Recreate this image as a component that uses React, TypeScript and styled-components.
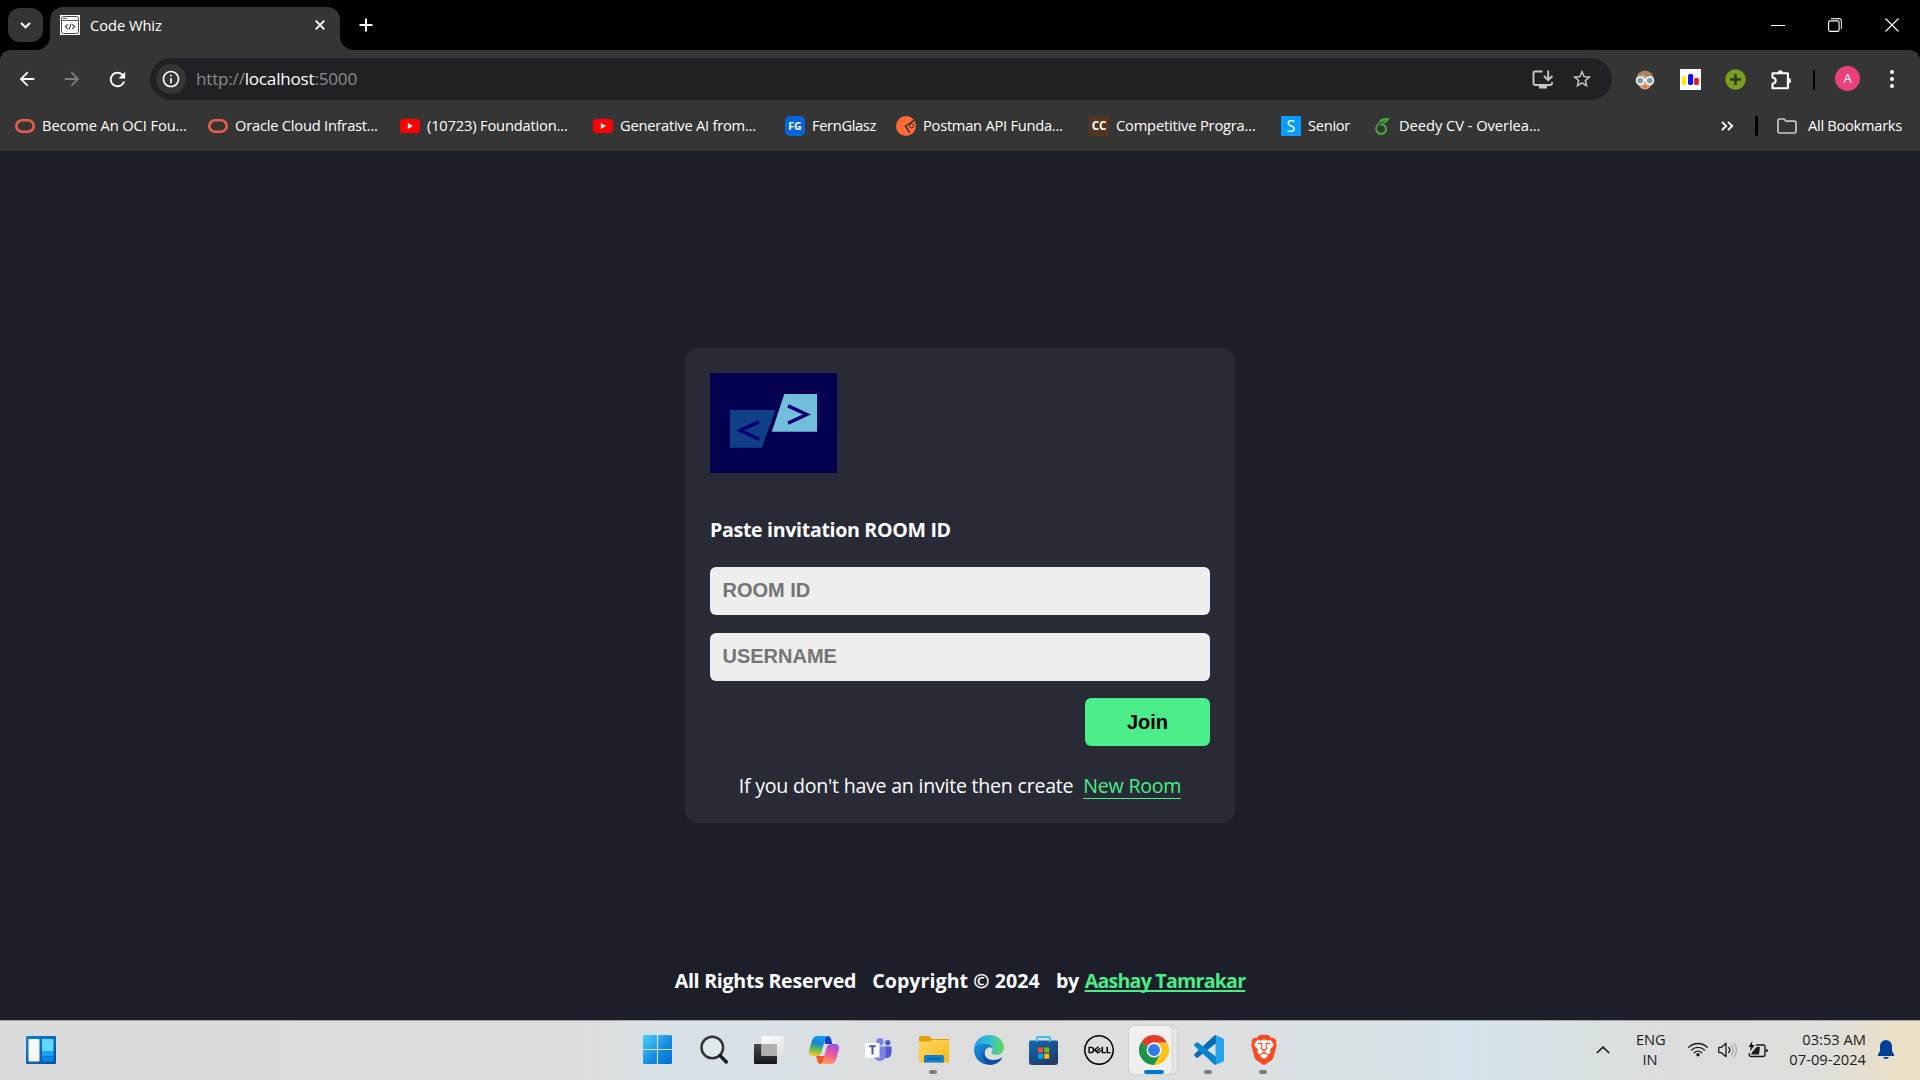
import React from 'react';
import styled, { createGlobalStyle } from 'styled-components';
import { MdArrowBack, MdArrowForward, MdRefresh, MdInfoOutline, MdStarBorder } from 'react-icons/md';
import { SiDell, SiBrave, SiOverleaf } from 'react-icons/si';

const ui = `"Segoe UI", "Open Sans", "Noto Sans", sans-serif`;

const Global = createGlobalStyle`
  * { box-sizing: border-box; }
  body { margin: 0; background: #1c1e29; overflow: hidden; font-family: ${ui}; }
  svg { display: block; flex: none; }
`;

const Screen = styled.div`
  width: 1920px;
  height: 1080px;
  display: flex;
  flex-direction: column;
  overflow: hidden;
`;

const Label = styled.span<{ $ls?: number }>`
  letter-spacing: ${p => p.$ls ?? 0}px;
  white-space: pre;
`;

/* ---------- browser chrome ---------- */

const TabStrip = styled.div`
  height: 50px;
  background: #000;
  display: flex;
  align-items: flex-end;
  padding-left: 8px;
  color: #fff;
`;

const TabSearch = styled.div`
  width: 35px;
  height: 34px;
  margin: 0 7px 8px 0;
  border-radius: 12px;
  background: #353535;
  display: grid;
  place-items: center;
`;

const Tab = styled.div`
  position: relative;
  width: 290px;
  height: 43px;
  padding: 0 15px 7px 10px;
  border-radius: 13px 13px 0 0;
  background: #353535;
  display: flex;
  align-items: center;
  gap: 10px;
  font-size: 14.7px;
  &::before, &::after {
    content: '';
    position: absolute;
    bottom: 0;
    width: 14px;
    height: 14px;
  }
  &::before { left: -14px; background: radial-gradient(circle at 0 0, transparent 13.5px, #353535 14.5px); }
  &::after { right: -14px; background: radial-gradient(circle at 100% 0, transparent 13.5px, #353535 14.5px); }
`;

const TabTitle = styled(Label)`
  flex: 1;
  line-height: 20px;
  padding-bottom: 1px;
`;

const NewTab = styled.div`
  align-self: center;
  margin-left: 19px;
`;

const WindowButtons = styled.div`
  margin-left: auto;
  align-self: stretch;
  display: flex;
  align-items: center;
  gap: 43px;
  padding: 0 21px 1px 0;
`;

const ToolbarBack = styled.div`
  height: 102px;
  background: #000;
`;

const Toolbar = styled.div`
  height: 102px;
  background: #353535;
  border-radius: 10px 10px 0 0;
  border-bottom: 1px solid #1c1e29;
`;

const NavRow = styled.div`
  height: 58px;
  display: flex;
  align-items: center;
  padding-left: 15px;
`;

const NavButton = styled.div<{ $dim?: boolean }>`
  width: 45px;
  color: ${p => (p.$dim ? '#7d7d7d' : '#fff')};
  padding-left: 1px;
`;

const Omnibox = styled.div`
  width: 1462px;
  height: 42px;
  border-radius: 21px;
  background: #202124;
  display: flex;
  align-items: center;
  padding: 0 19px 0 6px;
  font-size: 17.15px;
  color: #8a8b8d;
`;

const InfoBadge = styled.div`
  width: 30px;
  height: 30px;
  border-radius: 50%;
  background: #353535;
  display: grid;
  place-items: center;
  color: #fff;
  margin-right: 10px;
`;

const Url = styled(Label)`
  flex: 1;
  line-height: 24px;
  b { font-weight: 400; color: #fff; }
`;

const BoxIcons = styled.div`
  display: flex;
  align-items: center;
  gap: 17px;
  color: #c6c6c6;
`;

const Extensions = styled.div`
  display: flex;
  align-items: center;
  gap: 24px;
  margin-left: 23px;
  padding-top: 1px;
  & > :first-child { margin-right: 1px; }
  & > :last-child { margin-left: -3px; }
`;

const Divider = styled.div<{ $h: number; $w: number }>`
  width: ${p => p.$w}px;
  height: ${p => p.$h}px;
  background: #000;
  border-radius: 1px;
`;

const Avatar = styled.div`
  width: 25px;
  height: 25px;
  border-radius: 50%;
  background: #ec407a;
  color: #fff;
  font-size: 13px;
  line-height: 25px;
  text-align: center;
  margin: 0 30px 1px 20px;
`;

const BookmarkRow = styled.div`
  height: 36px;
  display: flex;
  align-items: center;
  padding-left: 15px;
  color: #fff;
  font-size: 14.7px;
  line-height: 20px;
  & ${Label} { padding-bottom: 2px; }
`;

const Bookmark = styled.div<{ $w: number }>`
  width: ${p => p.$w}px;
  display: flex;
  align-items: center;
  gap: 7px;
`;

const IconSlot = styled.div`
  width: 20px;
  height: 20px;
  display: grid;
  place-items: center;
`;

const LetterIcon = styled.div<{ $bg: string; $r?: number; $fs: number; $b?: boolean }>`
  width: 20px;
  height: 20px;
  border-radius: ${p => p.$r ?? 0}px;
  background: ${p => p.$bg};
  color: #fff;
  font-size: ${p => p.$fs}px;
  font-weight: ${p => (p.$b ? 700 : 400)};
  line-height: 20px;
  text-align: center;
`;

const BookmarkEnd = styled.div`
  margin-left: auto;
  display: flex;
  align-items: center;
  padding-right: 18px;
  & > ${Divider} { margin: 0 19px 0 21px; }
  & > ${Label} { margin-left: 11px; }
`;

/* ---------- page ---------- */

const Page = styled.main`
  height: 868px;
  background: #1c1e29;
  color: #fff;
  display: flex;
  flex-direction: column;
  align-items: center;
  padding-top: 196px;
  font-size: 19.6px;
  line-height: 30px;
`;

const Card = styled.section`
  width: 550px;
  height: 475px;
  padding: 25px 25px 20px;
  border-radius: 12.5px;
  background: #282a36;
  display: flex;
  flex-direction: column;
  & > * { flex: none; }
`;

const Heading = styled.h4`
  margin: 42px 0 22px;
  font-size: 19.6px;
  font-weight: 700;
  letter-spacing: -0.33px;
`;

const Field = styled.input`
  width: 500px;
  height: 48px;
  margin-bottom: 18px;
  padding: 0 12.5px 1px;
  border: 0;
  outline: 0;
  border-radius: 6px;
  background: #eee;
  font: 700 20px "Liberation Sans", Arial, sans-serif;
  &::placeholder { color: #757575; opacity: 1; }
`;

const JoinButton = styled.button`
  width: 125px;
  height: 48px;
  margin: -1px 0 25px;
  align-self: flex-end;
  padding: 0;
  border: 0;
  border-radius: 6px;
  background: #4aed88;
  color: #000;
  font: 700 20px "Liberation Sans", Arial, sans-serif;
`;

const Info = styled.div`
  display: flex;
  justify-content: center;
`;

const RoomLink = styled.a`
  height: 28px;
  margin-left: 10px;
  color: #4aed88;
  border-bottom: 1px solid #4aed88;
  letter-spacing: -0.24px;
`;

const Footer = styled.footer`
  margin-top: 143px;
  font-weight: 700;
  display: flex;
`;

const FooterPart = styled(Label)<{ $gap: number }>`
  margin-right: ${p => p.$gap}px;
`;

const AuthorLink = styled.a`
  color: #4aed88;
  text-decoration: underline;
  text-decoration-thickness: 2px;
  text-underline-offset: 2px;
  text-decoration-skip-ink: none;
  letter-spacing: -0.76px;
`;

/* ---------- taskbar ---------- */

const Taskbar = styled.div`
  height: 60px;
  border-top: 1px solid #a3a3a8;
  background: linear-gradient(90deg, #dbdbdb 0, #dcdcdc 560px, #d7e2e8 690px, #d9e0e4 790px, #dddddd 930px, #dedede 1180px, #dae1e4 1300px, #d8e1e5 1400px, #d4e4ec 1460px, #d8e0e3 1570px, #dddddb 1680px, #dededa 1820px, #ebe0c8 1900px, #ecdfc2 1920px);
  display: flex;
  align-items: center;
  color: #1b1b1b;
`;

const Widgets = styled.div`
  width: 604px;
  padding: 0 0 1px 26px;
`;

const Apps = styled.div`
  display: flex;
  align-self: stretch;
  margin-left: 27px;
`;

const AppSlot = styled.div<{ $nudge?: number }>`
  position: relative;
  width: 55px;
  padding: 0 ${p => p.$nudge ?? 0}px 2px 0;
  display: grid;
  place-items: center;
  & > svg { z-index: 1; }
`;

const Running = styled.i<{ $active?: boolean }>`
  position: absolute;
  z-index: 1;
  bottom: 6px;
  left: ${p => (p.$active ? 17.5 : 23)}px;
  width: ${p => (p.$active ? 20 : 8)}px;
  height: 4px;
  border-radius: 2px;
  background: ${p => (p.$active ? '#0078d4' : '#7c7c7c')};
`;

const ActiveTile = styled.i<{ $back?: boolean }>`
  position: absolute;
  top: 5px;
  left: 3px;
  width: ${p => (p.$back ? 48 : 43)}px;
  height: 48px;
  border-radius: 5px;
  background: ${p => (p.$back ? '#e6e6e6' : '#f0f0f0')};
  box-shadow: 0 0 0 1px #d0d0d0;
`;

const Tray = styled.div`
  margin-left: auto;
  display: flex;
  align-items: center;
  padding: 0 26px 2px 0;
`;

const StatusIcons = styled.div`
  display: flex;
  align-items: center;
  gap: 10px;
`;

const Language = styled.div`
  width: 28px;
  margin: 0 24px 0 26px;
  text-align: center;
  font-size: 14.7px;
  line-height: 20px;
  padding-bottom: 1px;
`;

const Clock = styled.div`
  width: 98px;
  margin-right: 12px;
  text-align: right;
  font-size: 14.7px;
  line-height: 20px;
  padding-bottom: 2px;
`;

/* ---------- icons ---------- */

const Oracle = () => (
  <svg width="20" height="14" viewBox="0 0 20 14"><rect x="1.3" y="1.3" width="17.4" height="11.4" rx="5.7" fill="none" stroke="#ea5c4a" strokeWidth="2.6" /></svg>
);
const YouTube = () => (
  <svg width="20" height="14" viewBox="0 0 20 14"><rect width="20" height="14" rx="3.6" fill="#f00" /><path d="M7.8 4v6l5.2-3z" fill="#fff" /></svg>
);
const Postman = () => (
  <svg width="20" height="20" viewBox="0 0 20 20">
    <circle cx="10" cy="10" r="10" fill="#ff6c37" />
    <path d="M18.6 4.2 9.5 10.2l4.3 6.4" fill="none" stroke="#353535" strokeWidth="1.6" />
    <circle cx="15.6" cy="9.8" r="2.1" fill="none" stroke="#353535" strokeWidth="1" />
  </svg>
);
const CodeWindow = () => (
  <svg width="20" height="20" viewBox="0 0 20 20">
    <rect width="20" height="20" fill="#fff" />
    <rect x="1.5" y="1.5" width="17" height="17" rx="2" fill="none" stroke="#4a4a4a" />
    <path d="M1.5 5.5h17M3 3.5h4" stroke="#4a4a4a" strokeWidth=".9" />
    <path d="M7.7 9.3 5.4 11.6l2.3 2.3M12.3 9.3l2.3 2.3-2.3 2.3M11 8.6l-2 6" fill="none" stroke="#333" strokeWidth="1.1" />
  </svg>
);
const Face = () => (
  <svg width="20" height="20" viewBox="0 0 20 20">
    <circle cx="10" cy="9.5" r="9" fill="#a8865c" />
    <path d="M3 9c2-1 4-3 5-5 2 2.6 6 3 9 5v3c-.5 4.5-3.5 7.5-7 7.5S3.500 16.500 3 12z" fill="#dfa07a" />
    <path d="M1 9.700h18" stroke="#fff" strokeWidth="1.600" />
    <circle cx="5.200" cy="10.600" r="3.700" fill="#6fa3b4" stroke="#fff" strokeWidth="1.500" />
    <circle cx="14.800" cy="10.600" r="3.700" fill="#6fa3b4" stroke="#fff" strokeWidth="1.500" />
    <path d="M8 16.500q2 1 4 0" stroke="#b3573f" fill="none" />
  </svg>
);
const Bars = () => (
  <svg width="21" height="21" viewBox="0 0 21 21">
    <rect width="21" height="21" fill="#fff" />
    <rect x="1.800" y="7" width="4.600" height="9" rx="1.500" fill="#fff000" />
    <rect x="8" y="5" width="5.200" height="11" rx="1.800" fill="#1a0dff" />
    <rect x="14.200" y="9" width="4.600" height="7" rx="1.500" fill="#f01414" />
  </svg>
);
const GreenPlus = () => (
  <svg width="21" height="21" viewBox="0 0 21 21"><circle cx="10.500" cy="10.500" r="10.300" fill="#789f1e" /><path d="M10.500 5v11M5 10.500h11" stroke="#2f3a14" strokeWidth="2.600" /></svg>
);
const Puzzle = () => (
  <svg width="22" height="22" viewBox="0 0 22 22">
    <path d="M3.600 4.300h14.300v14.900H2.500v-4.500c2.400-.3 3.200-1.500 3.200-3.100s-.8-2.800-3.200-3.100V4.300z" fill="none" stroke="#fff" strokeWidth="2.100" strokeLinejoin="round" />
    <path d="M7.600 4a2.700 2.700 0 0 1 5.400 0zM18.300 9a2.700 2.700 0 0 1 0 5.400z" fill="#fff" />
  </svg>
);

const Logo = () => (
  <svg width="127" height="100" viewBox="0 0 127 100">
    <rect width="127" height="100" fill="#02004f" />
    <path d="M20 37h45.400L52 74.700H20z" fill="#0f3f86" />
    <path d="M74.300 21h32.800v37.700H61.800z" fill="#72bfdb" />
    <path d="M49 48.800 30.200 57.500 49 66.200M78 32.800l18.700 8.700L78 50.200" fill="none" stroke="#030073" strokeWidth="3.500" />
  </svg>
);

const WidgetsIcon = () => (
  <svg width="30" height="28" viewBox="0 0 30 28">
    <defs><linearGradient id="wd" x1="0" y1="0" x2="1" y2="1"><stop stopColor="#0a84dc" /><stop offset="1" stopColor="#0b4c94" /></linearGradient></defs>
    <rect width="30" height="28" rx="1" fill="url(#wd)" />
    <rect x="2.500" y="3" width="11" height="22.500" rx="1" fill="#f8f8f8" />
    <rect x="16" y="3" width="11.500" height="12" fill="#62d6ff" />
    <rect x="16" y="15" width="11.500" height="5" fill="#1fa0f8" />
    <rect x="16" y="20.500" width="11.500" height="5" fill="#0a84ee" />
  </svg>
);
const StartIcon = () => (
  <svg width="29" height="29" viewBox="0 0 29 29">
    <defs><linearGradient id="st" gradientUnits="userSpaceOnUse" x1="0" y1="0" x2="29" y2="29"><stop stopColor="#4fd0ff" /><stop offset=".55" stopColor="#168ee0" /><stop offset="1" stopColor="#0070cf" /></linearGradient></defs>
    <path d="M1 0h12.900v13.900H0V1zM15.100 0H28l1 1v12.900H15.100zM0 15.100h13.900V29H1l-1-1zM15.100 15.100H29V28l-1 1H15.100z" fill="url(#st)" />
  </svg>
);
const SearchIcon = () => (
  <svg width="28" height="29" viewBox="0 0 28 29"><circle cx="12.300" cy="12.500" r="10.800" fill="#fff" fillOpacity=".25" stroke="#333" strokeWidth="2.500" /><path d="m20 20.500 6.300 6.500" stroke="#1c1c1c" strokeWidth="3.400" strokeLinecap="round" /></svg>
);
const TaskView = () => (
  <svg width="30" height="28" viewBox="0 0 30 28">
    <defs>
      <linearGradient id="tv" x1="0" y1="0" x2="0" y2="1"><stop stopColor="#4a4a4a" /><stop offset="1" stopColor="#161616" /></linearGradient>
      <linearGradient id="tw" x1="0" y1="0" x2="1" y2="1"><stop stopColor="#fff" /><stop offset="1" stopColor="#dedede" /></linearGradient>
    </defs>
    <rect y="8" width="23" height="20" rx="1" fill="url(#tv)" />
    <rect x="7.500" width="22.500" height="20" rx="1" fill="url(#tw)" />
    <path d="M7.500 8H23v12H7.500z" fill="#b0b0b0" />
  </svg>
);
const Copilot = () => (
  <svg width="30" height="28" viewBox="0 0 30 28">
    <defs>
      <linearGradient id="ca" x1=".5" y1="0" x2=".3" y2="1"><stop stopColor="#109ff0" /><stop offset=".35" stopColor="#1b86d6" /><stop offset=".65" stopColor="#5eb560" /><stop offset="1" stopColor="#f0cd1c" /></linearGradient>
      <linearGradient id="cb" x1=".6" y1="0" x2=".3" y2="1"><stop stopColor="#a34be8" /><stop offset=".5" stopColor="#ee5a9a" /><stop offset="1" stopColor="#ffa25c" /></linearGradient>
    </defs>
    <path d="M15 0h3.500c2.200 0 3 1.300 3.600 3.300L23.300 8H16z" fill="#1641c4" />
    <path d="M15 28h-3c-2.300 0-3.200-1.500-3.700-3.500L7 20h8z" fill="#f0552c" />
    <path d="M8.500 0H19c-2 .7-2.600 2.500-3.200 4.500L12.500 16c-.7 2.400-1.900 4-4.500 4H4c-3.500 0-4.700-2.700-3.700-6.500L2.800 5C3.800 1.600 5.400 0 8.500 0z" fill="url(#ca)" />
    <path d="M21.500 28H11c2-.7 2.600-2.500 3.200-4.500L17.500 12c.7-2.400 1.900-4 4.500-4h4c3.500 0 4.700 2.700 3.700 6.500L27.200 23c-1 3.400-2.600 5-5.700 5z" fill="url(#cb)" />
  </svg>
);
const Teams = () => (
  <svg width="27" height="24" viewBox="0 0 27 24">
    <circle cx="15" cy="3.800" r="3.700" fill="#7b83eb" /><circle cx="22.800" cy="4.800" r="2.700" fill="#5059c9" />
    <path d="M19 8.500h7.500v7a4.800 4.800 0 0 1-7.500 3.600z" fill="#5059c9" />
    <path d="M9 8.500h12v8.300a6.300 6.300 0 0 1-12 2.500z" fill="#7b83eb" />
    <rect x="0" y="5" width="14.500" height="14.500" fill="#fff" />
    <path d="M4.200 8.300h6.600M7.500 8v8.500" stroke="#4b53bc" strokeWidth="2" fill="none" />
  </svg>
);
const Folder = () => (
  <svg width="30" height="27" viewBox="0 0 30 27">
    <defs><linearGradient id="fo" x1="0" y1="0" x2="1" y2="1"><stop stopColor="#ffd865" /><stop offset="1" stopColor="#fcb714" /></linearGradient></defs>
    <path d="M0 1.500Q0 0 1.500 0H10l3 3h17v4H0z" fill="#e09f0c" />
    <path d="M0 5.500h11l2-1.500h17v21.500l-1 1H1l-1-1z" fill="url(#fo)" />
    <path d="M5 26.500V21q0-2 2-2h16q2 0 2 2v5.500z" fill="#0f7fd0" /><path d="M8.500 22.700h13" stroke="#0a5599" strokeWidth="1.200" />
  </svg>
);
const Edge = () => (
  <svg width="30" height="30" viewBox="0 0 30 30">
    <defs>
      <linearGradient id="ea" x1="0" y1=".3" x2="1" y2=".4"><stop stopColor="#249be0" /><stop offset=".5" stopColor="#30bfd8" /><stop offset="1" stopColor="#62d85a" /></linearGradient>
      <linearGradient id="eb" x1="0" y1="0" x2=".7" y2="1"><stop stopColor="#1b90dc" /><stop offset="1" stopColor="#0b62b8" /></linearGradient>
    </defs>
    <path d="M0 14C.7 5.500 7 0 15 0c9 0 15 6 15 12.500 0 4.500-3.500 7.500-7.500 7.500-3 0-5.300-1-5.300-2.200 0-.9 1.300-1.300 1.300-3.800C18.500 11 15 8.500 10.500 8.500 5 8.500 1 11 0 14z" fill="url(#ea)" />
    <path d="M0 14.500C.8 10.500 5.500 8.500 10.500 8.500c4.500 0 8 2.300 8 5.500-1-1.800-3-2-4.500-1.300-3 1.500-4.500 5-3.500 9 1 4 4 7 7.500 8C8 31 0 24 0 14.500z" fill="url(#eb)" />
    <path d="M10.800 15.500C9.700 20 12 25 19.500 25c3.500 0 6-1.200 7.500-2 .8-.4 1.200.2.800.8C25 28 20.500 30 16.500 30c-6-1-10.500-8.500-5.700-14.500z" fill="#124f9e" />
  </svg>
);
const Store = () => (
  <svg width="29" height="30" viewBox="0 0 29 30">
    <defs><linearGradient id="so" x1="0" y1="0" x2=".6" y2="1"><stop stopColor="#0f6ab5" /><stop offset="1" stopColor="#213c69" /></linearGradient></defs>
    <path d="M1 5.500h27l1 1V27q0 3-3 3H3q-3 0-3-3V6.500z" fill="url(#so)" />
    <path d="M8 7V2.800Q8 2 8.800 2h11.400q.8 0 .8.800V7" fill="none" stroke="#37bff4" strokeWidth="1.900" />
    <path d="M9 12.500h5v5H9z" fill="#f25022" /><path d="M15.200 12.500h5v5h-5z" fill="#7fba00" /><path d="M9 18.700h5v5H9z" fill="#00a4ef" /><path d="M15.200 18.700h5v5h-5z" fill="#ffb900" />
  </svg>
);
const Chrome = () => (
  <svg width="30" height="30" viewBox="0 0 48 48">
    <path d="M24 24 44.800 12A24 24 0 0 1 24 48z" fill="#fcc31e" />
    <path d="M24 24 24 48A24 24 0 0 1 3.200 12z" fill="#1e9447" />
    <path d="M24 12h20.800L34.400 30z" fill="#fcc31e" /><path d="M34.400 30 24 48 13.600 30z" fill="#1e9447" />
    <path d="M3.200 12A24 24 0 0 1 44.800 12H24a12 12 0 0 0-10.400 6z" fill="#e33b2e" />
    <path d="m3.200 12 10.400 18L24 24z" fill="#1e9447" />
    <circle cx="24" cy="24" r="12" fill="#fff" /><circle cx="24" cy="24" r="9.600" fill="#2f7de9" />
  </svg>
);
const VsCode = () => (
  <svg width="30" height="30" viewBox="0 0 30 30">
    <path d="M21.500 0 29 3.300Q30 4 30 5v20q0 1-1 1.700L21.500 30z" fill="#27a3ee" />
    <path d="M22 .2v8L4 22.500q-1 .7-1.800 0L.5 20.800q-.9-1 0-1.800L20 .8Q21 0 22 .2z" fill="#0a6cb5" />
    <path d="M22 29.800v-8L4 7.500q-1-.7-1.800 0L.5 9.200q-.9 1 0 1.800L20 29.200q1 .8 2 .6z" fill="#0b84ce" />
  </svg>
);
const BraveMark = styled.div`
  width: 26px;
  height: 30px;
  display: grid;
  place-items: center;
  color: #fb4a22;
  & > svg { grid-area: 1 / 1; }
`;

const Wifi = () => (
  <svg width="20" height="15" viewBox="0 0 20 15"><g fill="none" stroke="#1b1b1b" strokeWidth="1.300" strokeLinecap="round"><path d="M.8 5.300a13 13 0 0 1 18.400 0M3.600 8a9.100 9.100 0 0 1 12.800 0M6.300 10.700a5.300 5.300 0 0 1 7.400 0" /></g><circle cx="10" cy="12.800" r="1.700" fill="#1b1b1b" /></svg>
);
const Sound = () => (
  <svg width="20" height="16" viewBox="0 0 20 16"><g fill="none" strokeWidth="1.300" strokeLinejoin="round" strokeLinecap="round"><path d="M.8 5.300h2.700L8 1.300v13.400l-4.500-4H.8zM10.700 5.500a3.700 3.700 0 0 1 0 5" stroke="#1b1b1b" /><path d="M13.200 3.200a7 7 0 0 1 0 9.600M15.800 1a10.500 10.500 0 0 1 0 14" stroke="#aaa" /></g></svg>
);
const Battery = () => (
  <svg width="20" height="17" viewBox="0 0 20 17"><path d="M8 4h7.500q1.500 0 1.500 1.500v8q0 2-2 2H3.300q-2 0-2-2V12" fill="none" stroke="#1b1b1b" strokeWidth="1.400" /><path d="M18 8q2 0 2 1.500T18 11z" fill="#1b1b1b" /><path d="M8.500 6H12l-1 7.500H3.500V12z" fill="#1b1b1b" /><path d="M4.300 0 .5 6h2.300l-.8 4.500L6.800 4H4z" fill="#1b1b1b" /></svg>
);
const Bell = () => (
  <svg width="16" height="19" viewBox="0 0 16 19"><path d="M8 0a6 6 0 0 1 6 6v5l2 3.500V16H0v-1.500L2 11V6a6 6 0 0 1 6-6zM5 17h6q-.8 2-3 2t-3-2z" fill="#003f96" /></svg>
);

const bookmarks: { w: number; text: string; ls: number; icon: React.ReactNode }[] = [
  { w: 193, text: 'Become An OCI Fou...', ls: -0.11, icon: <Oracle /> },
  { w: 192, text: 'Oracle Cloud Infrast...', ls: -0.23, icon: <Oracle /> },
  { w: 193, text: '(10723) Foundation...', ls: -0.18, icon: <YouTube /> },
  { w: 192, text: 'Generative AI from...', ls: -0.24, icon: <YouTube /> },
  { w: 111, text: 'FernGlasz', ls: -0.36, icon: <LetterIcon $bg="#0664dc" $r={5} $fs={10.5} $b>FG</LetterIcon> },
  { w: 193, text: 'Postman API Funda...', ls: -0.26, icon: <Postman /> },
  { w: 192, text: 'Competitive Progra...', ls: -0.19, icon: <LetterIcon $bg="#553420" $fs={11.5} $b>CC</LetterIcon> },
  { w: 91, text: 'Senior', ls: -0.3, icon: <LetterIcon $bg="#0a9dff" $r={1} $fs={16}>S</LetterIcon> },
  { w: 180, text: 'Deedy CV - Overlea...', ls: -0.05, icon: <SiOverleaf size={17} color="#46a83a" /> },
];

export default function App() {
  return (
    <Screen>
      <Global />
      <TabStrip>
        <TabSearch><svg width="11" height="7" viewBox="0 0 11 7"><path d="m1 1 4.500 4.300L10 1" fill="none" stroke="#fff" strokeWidth="2" /></svg></TabSearch>
        <Tab>
          <CodeWindow />
          <TabTitle $ls={-0.05}>Code Whiz</TabTitle>
          <svg width="10" height="10" viewBox="0 0 10 10"><path d="m.7.7 8.600 8.600M9.300.7.7 9.300" stroke="#fff" strokeWidth="1.800" /></svg>
        </Tab>
        <NewTab><svg width="14" height="14" viewBox="0 0 14 14"><path d="M7 .5v13M.5 7h13" stroke="#fff" strokeWidth="1.900" /></svg></NewTab>
        <WindowButtons>
          <svg width="14" height="14" viewBox="0 0 14 14"><path d="M0 7.500h14" stroke="#fff" /></svg>
          <svg width="14" height="14" viewBox="0 0 14 14"><rect x=".6" y="2.900" width="10.500" height="10.500" rx="1.500" fill="none" stroke="#fff" strokeWidth="1.100" /><path d="M3 .6h8a2.400 2.400 0 0 1 2.400 2.400v8" fill="none" stroke="#ddd" strokeWidth="1.100" /></svg>
          <svg width="14" height="14" viewBox="0 0 14 14"><path d="m.5.5 13 13M13.500.5l-13 13" stroke="#fff" strokeWidth="1.100" /></svg>
        </WindowButtons>
      </TabStrip>
      <ToolbarBack>
        <Toolbar>
          <NavRow>
            <NavButton><MdArrowBack size={22} /></NavButton>
            <NavButton $dim><MdArrowForward size={22} /></NavButton>
            <NavButton><MdRefresh size={23} /></NavButton>
            <Omnibox>
              <InfoBadge><MdInfoOutline size={20} /></InfoBadge>
              <Url $ls={-0.23}>http://<b>localhost</b>:5000</Url>
              <BoxIcons>
                <svg width="22" height="19" viewBox="0 0 22 19"><path d="M10.500 1.500H3Q1.500 1.500 1.500 3v10.500Q1.500 15 3 15h15.500q1.500 0 1.500-1.500V12" fill="none" stroke="currentColor" strokeWidth="1.900" /><path d="M7 15.500h8V18.500H7z" fill="currentColor" /><path d="M16.200.5V10M12 6l4.200 4.200L20.400 6" fill="none" stroke="currentColor" strokeWidth="1.900" /></svg>
                <MdStarBorder size={22} />
              </BoxIcons>
            </Omnibox>
            <Extensions><Face /><Bars /><GreenPlus /><Puzzle /><Divider $w={2} $h={20} /></Extensions>
            <Avatar>A</Avatar>
            <svg width="4" height="18" viewBox="0 0 4 18"><g fill="#fff"><circle cx="2" cy="2" r="2" /><circle cx="2" cy="9" r="2" /><circle cx="2" cy="16" r="2" /></g></svg>
          </NavRow>
          <BookmarkRow>
            {bookmarks.map(b => (
              <Bookmark key={b.text} $w={b.w}><IconSlot>{b.icon}</IconSlot><Label $ls={b.ls}>{b.text}</Label></Bookmark>
            ))}
            <BookmarkEnd>
              <svg width="13" height="10" viewBox="0 0 13 10"><path d="m1 .8 4.200 4.200L1 9.200M7 .8 11.200 5 7 9.200" fill="none" stroke="#fff" strokeWidth="1.900" /></svg>
              <Divider $w={3} $h={20} />
              <svg width="20" height="16" viewBox="0 0 20 16"><path d="M1 13.500V2.500Q1 1 2.500 1H7l2 2.200h8.500q1.500 0 1.500 1.500v8.800q0 1.500-1.500 1.500h-15Q1 15 1 13.500z" fill="none" stroke="#c8c8c8" strokeWidth="1.700" /></svg>
              <Label $ls={-0.3}>All Bookmarks</Label>
            </BookmarkEnd>
          </BookmarkRow>
        </Toolbar>
      </ToolbarBack>

      <Page>
        <Card>
          <Logo />
          <Heading>Paste invitation ROOM ID</Heading>
          <Field placeholder="ROOM ID" />
          <Field placeholder="USERNAME" />
          <JoinButton>Join</JoinButton>
          <Info><Label $ls={-0.24}>If you don't have an invite then create</Label><RoomLink>New Room</RoomLink></Info>
        </Card>
        <Footer>
          <FooterPart $ls={-0.27} $gap={16}>All Rights Reserved</FooterPart>
          <FooterPart $ls={0.06} $gap={16}>Copyright © 2024</FooterPart>
          <FooterPart $ls={-0.4} $gap={6}>by</FooterPart>
          <AuthorLink>Aashay Tamrakar</AuthorLink>
        </Footer>
      </Page>

      <Taskbar>
        <Widgets><WidgetsIcon /></Widgets>
        <Apps>
          <AppSlot $nudge={2}><StartIcon /></AppSlot>
          <AppSlot><SearchIcon /></AppSlot>
          <AppSlot><TaskView /></AppSlot>
          <AppSlot><Copilot /></AppSlot>
          <AppSlot><Teams /></AppSlot>
          <AppSlot><Folder /><Running /></AppSlot>
          <AppSlot><Edge /></AppSlot>
          <AppSlot><Store /></AppSlot>
          <AppSlot><SiDell size={30} color="#000" /></AppSlot>
          <AppSlot><ActiveTile $back /><ActiveTile /><Chrome /><Running $active /></AppSlot>
          <AppSlot><VsCode /><Running /></AppSlot>
          <AppSlot $nudge={3}>
            <BraveMark>
              <svg width="20" height="24" viewBox="0 0 20 24"><path d="M2 3h16l1 6-4 11-5 4-5-4L1 9z" fill="#fff" /></svg>
              <SiBrave size={30} />
            </BraveMark>
            <Running />
          </AppSlot>
        </Apps>
        <Tray>
          <svg width="14" height="8" viewBox="0 0 14 8"><path d="m.8 7 6.200-5.800L13.200 7" fill="none" stroke="#1b1b1b" strokeWidth="1.600" /></svg>
          <Language><Label $ls={-0.11}>ENG</Label><br />IN</Language>
          <StatusIcons><Wifi /><Sound /><Battery /></StatusIcons>
          <Clock>03:53 AM<br />07-09-2024</Clock>
          <Bell />
        </Tray>
      </Taskbar>
    </Screen>
  );
}
